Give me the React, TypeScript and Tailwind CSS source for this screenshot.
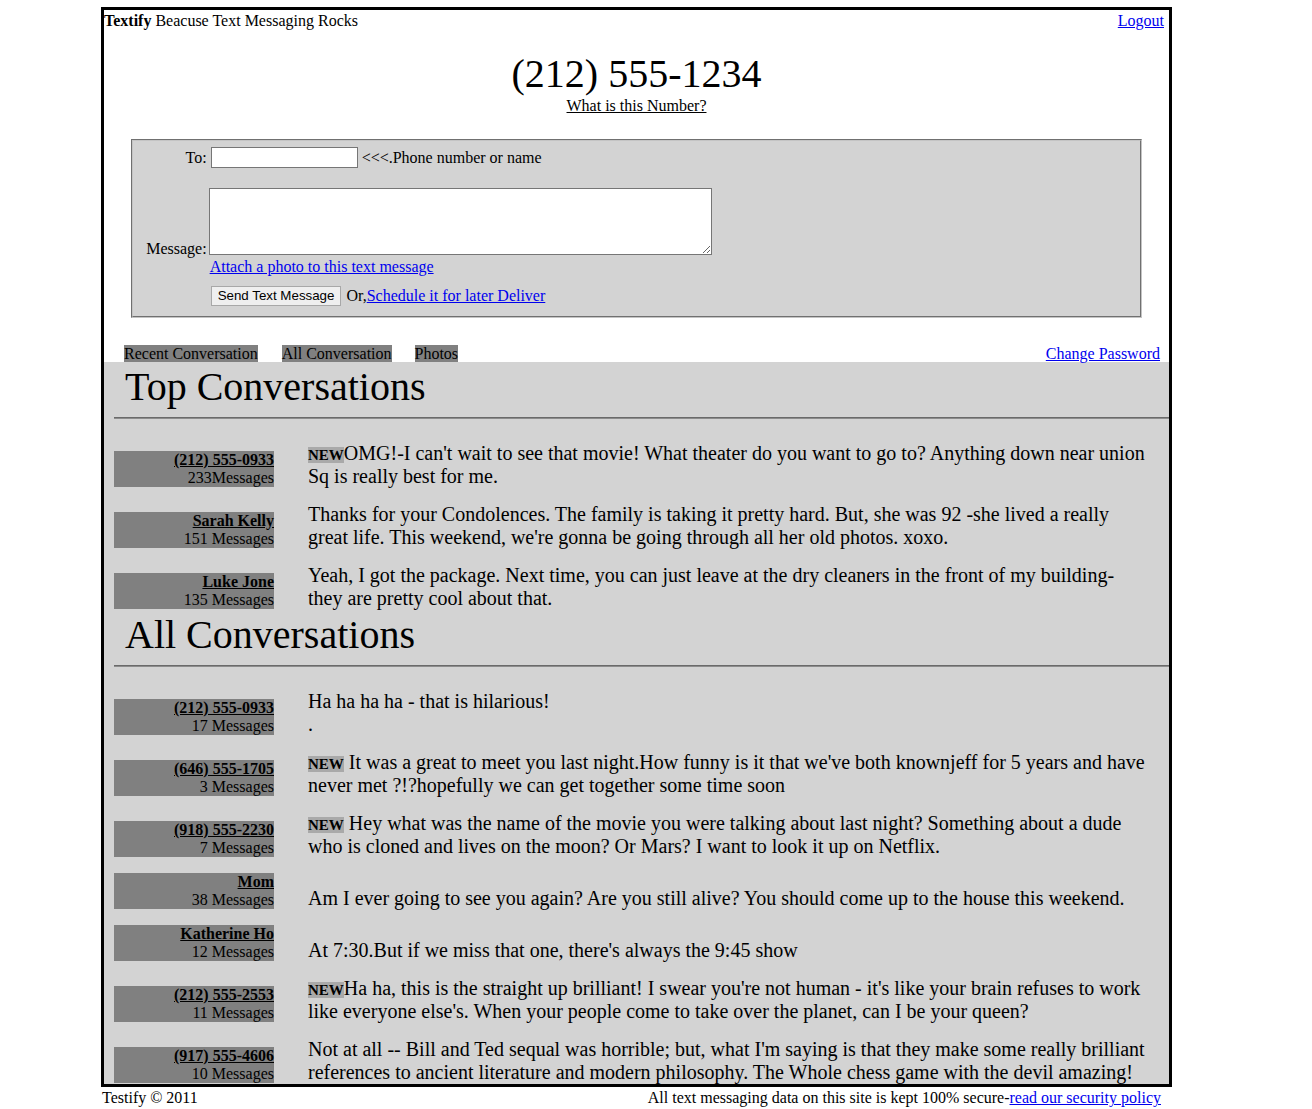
import React from "react";

type Row = {
  name: string;
  count: string;
  isNew?: boolean;
  newSpace?: boolean;
  text: React.ReactNode;
};

const topRows: Row[] = [
  {
    name: "(212) 555-0933",
    count: "233Messages",
    isNew: true,
    text: "OMG!-I can't wait to see that movie! What theater do you want to go to? Anything down near union Sq is really best for me.",
  },
  {
    name: "Sarah Kelly",
    count: "151 Messages",
    text: "Thanks for your Condolences. The family is taking it pretty hard. But, she was 92 -she lived a really great life. This weekend, we're gonna be going through all her old photos. xoxo.",
  },
  {
    name: "Luke Jone",
    count: "135 Messages",
    text: "Yeah, I got the package. Next time, you can just leave at the dry cleaners in the front of my building-they are pretty cool about that.",
  },
];

const allRows: Row[] = [
  {
    name: "(212) 555-0933",
    count: "17 Messages",
    text: (
      <>
        Ha ha ha ha - that is hilarious!
        <br />.
      </>
    ),
  },
  {
    name: "(646) 555-1705",
    count: "3 Messages",
    isNew: true,
    newSpace: true,
    text: "It was a great to meet you last night.How funny is it that we've both knownjeff for 5 years and have never met ?!?hopefully we can get together some time soon",
  },
  {
    name: "(918) 555-2230",
    count: "7 Messages",
    isNew: true,
    newSpace: true,
    text: "Hey what was the name of the movie you were talking about last night? Something about a dude who is cloned and lives on the moon? Or Mars? I want to look it up on Netflix.",
  },
  {
    name: "Mom",
    count: "38 Messages",
    text: "Am I ever going to see you again? Are you still alive? You should come up to the house this weekend.",
  },
  {
    name: "Katherine Ho",
    count: "12 Messages",
    text: "At 7:30.But if we miss that one, there's always the 9:45 show",
  },
  {
    name: "(212) 555-2553",
    count: "11 Messages",
    isNew: true,
    text: "Ha ha, this is the straight up brilliant! I swear you're not human - it's like your brain refuses to work like everyone else's. When your people come to take over the planet, can I be your queen?",
  },
  {
    name: "(917) 555-4606",
    count: "10 Messages",
    text: "Not at all -- Bill and Ted sequal was horrible; but, what I'm saying is that they make some really brilliant references to ancient literature and modern philosophy. The Whole chess game with the devil amazing!",
  },
];

function ConvRow({ row }: { row: Row }) {
  return (
    <div className="flex pr-[22px] [align-items:last_baseline]">
      <div className="ml-[10px] w-[160px] shrink-0 whitespace-nowrap bg-[#808080] text-right text-[16px] leading-[18px]">
        <div>
          <a href="#" className="font-bold text-black underline">
            {row.name}
          </a>
        </div>
        <div>{row.count}</div>
      </div>
      <div className="ml-[34px] min-w-0 flex-1 text-[20px] leading-[23px]">
        {row.isNew && (
          <span className="bg-[#a9a9a9] text-[15px] font-bold leading-[16px]">NEW</span>
        )}
        {row.isNew && row.newSpace ? " " : ""}
        {row.text}
      </div>
    </div>
  );
}

function Section({ title, rows }: { title: string; rows: Row[] }) {
  return (
    <div>
      <div className="pl-[21px] pt-[2px] text-[40px] leading-[46px]">{title}</div>
      <div className="ml-[10px] mt-[7px] h-[2px] border-t border-b border-t-[#6a6a6a] border-b-[#8c8c8c]" />
      <div className="flex flex-col gap-[15px] pt-[23px]">
        {rows.map((r, i) => (
          <ConvRow key={i} row={r} />
        ))}
      </div>
    </div>
  );
}

export default function App() {
  return (
    <div className="min-h-[1109px] bg-white font-['Liberation_Serif','Times_New_Roman',serif] text-[16px] text-black">
      <div className="ml-[101px] w-[1071px] pt-[7px]">
        <div className="border-[3px] border-black">
          {/* header */}
          <div className="flex justify-between pt-[2px] pr-[5px] leading-[18px]">
            <div>
              <b>Textify</b> Beacuse Text Messaging Rocks
            </div>
            <a href="#" className="text-[#0000ee] underline">
              Logout
            </a>
          </div>
          <div className="mt-[21px] text-center text-[40px] leading-[46px]">
            (212) 555-1234
          </div>
          <div className="text-center leading-[18px]">
            <a href="#" className="text-black underline">
              What is this Number?
            </a>
          </div>

          {/* form */}
          <div className="mx-auto mt-[24px] w-[95%] border-2 border-[#c4c4c4] bg-[#d3d3d3] [border-style:groove] pb-[10px]">
            <div className="mt-[6px] flex h-[21px] items-center leading-[18px]">
              <div className="w-[74px] shrink-0 text-right">To:</div>
              <input
                type="text"
                className="ml-[4px] h-[21px] w-[147px] border border-[#767676] bg-white px-[2px] outline-none"
              />
              <span className="ml-[4px]">&lt;&lt;&lt;.Phone number or name</span>
            </div>
            <div className="mt-[20px] flex items-end">
              <div className="w-[74px] shrink-0 text-right leading-[12px]">Message:</div>
              <textarea className="ml-[2px] block h-[67px] w-[503px] resize border border-[#767676] bg-white outline-none" />
            </div>
            <div className="mt-[3px] flex leading-[18px]">
              <div className="w-[74px] shrink-0" />
              <a href="#" className="ml-[3px] text-[#0000ee] underline">
                Attach a photo to this text message
              </a>
            </div>
            <div className="mt-[10px] flex items-center leading-[18px]">
              <div className="w-[74px] shrink-0" />
              <button
                type="button"
                className="ml-[4px] h-[20px] border border-[#a8a8a8] bg-[#efefef] px-[6px] font-['Liberation_Sans',Arial,sans-serif] text-[13.33px] leading-[18px] text-black"
              >
                Send Text Message
              </button>
              <span className="ml-[5px]">Or,</span>
              <a href="#" className="text-[#0000ee] underline">
                Schedule it for later Deliver
              </a>
            </div>
          </div>

          {/* tabs */}
          <div className="mt-[27px] flex h-[17px] items-end pl-[20px] pr-[9px] leading-[17px]">
            <span className="mr-[24px] bg-[#808080]">Recent Conversation</span>
            <span className="mr-[23px] bg-[#808080]">All Conversation</span>
            <span className="bg-[#808080]">Photos</span>
            <a href="#" className="ml-auto text-[#0000ee] underline">
              Change Password
            </a>
          </div>

          {/* conversations */}
          <div className="bg-[#d3d3d3]">
            <Section title="Top Conversations" rows={topRows} />
            <Section title="All Conversations" rows={allRows} />
          </div>
        </div>

        {/* footer */}
        <div className="mt-[2px] flex justify-between pl-[1px] pr-[11px] leading-[18px]">
          <div>Testify © 2011</div>
          <div>
            All text messaging data on this site is kept 100% secure-
            <a href="#" className="text-[#0000ee] underline">
              read our security policy
            </a>
          </div>
        </div>
      </div>
    </div>
  );
}
